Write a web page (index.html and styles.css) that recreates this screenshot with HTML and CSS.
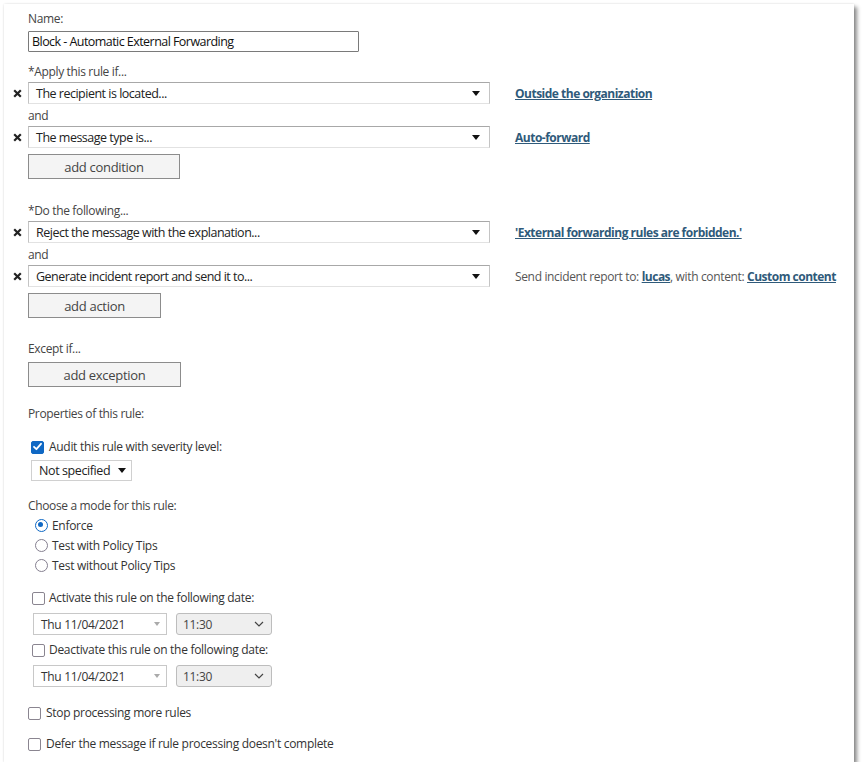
FILE: index.html
```html
<!DOCTYPE html>
<html>
<head>
<meta charset="utf-8">
<link rel="stylesheet" href="styles.css">
</head>
<body>
<div class="panel">
  <div class="lbl l-name">Name:</div>
  <div class="name-input">Block - Automatic External Forwarding</div>

  <div class="lbl l-apply">*Apply this rule if...</div>
  <div class="row r-first">
    <span class="x"><svg width="9" height="9" viewBox="0 0 9 9"><path d="M1.2 1.2 L7.8 7.8 M7.8 1.2 L1.2 7.8" stroke="#222" stroke-width="2.2"/></svg></span>
    <div class="dd"><span>The recipient is located...</span><span class="tri"></span></div>
    <a class="link">Outside the organization</a>
  </div>
  <div class="lbl l-and">and</div>
  <div class="row r-next">
    <span class="x"><svg width="9" height="9" viewBox="0 0 9 9"><path d="M1.2 1.2 L7.8 7.8 M7.8 1.2 L1.2 7.8" stroke="#222" stroke-width="2.2"/></svg></span>
    <div class="dd"><span>The message type is...</span><span class="tri"></span></div>
    <a class="link">Auto-forward</a>
  </div>
  <div class="btn b-cond">add condition</div>

  <div class="lbl l-do">*Do the following...</div>
  <div class="row r-first">
    <span class="x"><svg width="9" height="9" viewBox="0 0 9 9"><path d="M1.2 1.2 L7.8 7.8 M7.8 1.2 L1.2 7.8" stroke="#222" stroke-width="2.2"/></svg></span>
    <div class="dd"><span>Reject the message with the explanation...</span><span class="tri"></span></div>
    <a class="link">'External forwarding rules are forbidden.'</a>
  </div>
  <div class="lbl l-and">and</div>
  <div class="row r-next">
    <span class="x"><svg width="9" height="9" viewBox="0 0 9 9"><path d="M1.2 1.2 L7.8 7.8 M7.8 1.2 L1.2 7.8" stroke="#222" stroke-width="2.2"/></svg></span>
    <div class="dd"><span>Generate incident report and send it to...</span><span class="tri"></span></div>
    <span class="note">Send incident report to: <a class="link">lucas</a>, with content: <a class="link">Custom content</a></span>
  </div>
  <div class="btn b-action">add action</div>

  <div class="lbl l-except">Except if...</div>
  <div class="btn b-exc">add exception</div>

  <div class="lbl l-props">Properties of this rule:</div>
  <div class="check c-audit"><span class="cb on"><svg viewBox="0 0 13 13" width="13" height="13"><path d="M3 6.8 L5.4 9.2 L10 3.8" fill="none" stroke="#fff" stroke-width="1.8" stroke-linecap="round" stroke-linejoin="round"/></svg></span><span>Audit this rule with severity level:</span></div>
  <div class="sev"><span>Not specified</span><span class="tri"></span></div>

  <div class="lbl l-mode">Choose a mode for this rule:</div>
  <div class="radios">
    <div class="radio"><span class="rb on"></span><span>Enforce</span></div>
    <div class="radio"><span class="rb"></span><span>Test with Policy Tips</span></div>
    <div class="radio"><span class="rb"></span><span>Test without Policy Tips</span></div>
  </div>

  <div class="check c-act"><span class="cb"></span><span>Activate this rule on the following date:</span></div>
  <div class="dates">
    <div class="date"><span>Thu 11/04/2021</span><span class="caret"></span></div>
    <div class="time"><span>11:30</span><svg class="chev" width="10" height="6" viewBox="0 0 10 6"><path d="M1 1 L5 5 L9 1" fill="none" stroke="#444" stroke-width="1.2"/></svg></div>
  </div>
  <div class="check c-deact"><span class="cb"></span><span>Deactivate this rule on the following date:</span></div>
  <div class="dates">
    <div class="date"><span>Thu 11/04/2021</span><span class="caret"></span></div>
    <div class="time"><span>11:30</span><svg class="chev" width="10" height="6" viewBox="0 0 10 6"><path d="M1 1 L5 5 L9 1" fill="none" stroke="#444" stroke-width="1.2"/></svg></div>
  </div>

  <div class="check c-stop"><span class="cb"></span><span>Stop processing more rules</span></div>
  <div class="check c-defer"><span class="cb"></span><span>Defer the message if rule processing doesn't complete</span></div>
</div>
</body>
</html>
```

FILE: styles.css
```css
html, body {
  margin: 0;
  padding: 0;
  background: #ffffff;
}
body {
  font-family: "Open Sans", "Noto Sans", "Liberation Sans", sans-serif;
  font-size: 12px;
  color: #333;
}
.panel {
  margin: 4px 0 0 4px;
  width: 850px;
  height: 758px;
  box-sizing: border-box;
  padding: 7px 0 0 24px;
  background: #fff;
  box-shadow: 3px 3px 4px rgba(0,0,0,0.45), 0 0 2px rgba(0,0,0,0.12);
}
.lbl {
  height: 16px;
  line-height: 16px;
  color: #444;
  letter-spacing: -0.35px;
}
.l-apply { margin-top: 12px; }
.l-and { margin-top: 4px; }
.l-do { margin-top: 24px; }
.l-except { margin-top: 23px; }
.l-props { margin-top: 19px; }
.l-mode { margin-top: 17px; }

.name-input {
  margin-top: 4px;
  width: 331px;
  height: 21px;
  box-sizing: border-box;
  border: 1px solid #7a7a7a;
  border-radius: 1px;
  padding: 0 3px;
  line-height: 19px;
  font-size: 12.5px;
  color: #111;
  letter-spacing: -0.55px;
}

.row {
  display: flex;
  align-items: center;
  height: 22px;
  margin-left: -24px;
}
.r-first { margin-top: 2px; }
.r-next { margin-top: 2px; }
.x {
  width: 24px;
  display: flex;
  align-items: center;
  justify-content: center;
  padding-left: 2px;
  box-sizing: border-box;
}
.dd {
  width: 462px;
  height: 22px;
  box-sizing: border-box;
  border: 1px solid #c4c4c4;
  border-top-color: #a8a8a8;
  border-bottom-color: #e2e2e2;
  display: flex;
  align-items: center;
  justify-content: space-between;
  padding: 0 9px 0 7px;
  color: #222;
  font-size: 12.5px;
  letter-spacing: -0.5px;
}
.tri {
  width: 0;
  height: 0;
  border-left: 4px solid transparent;
  border-right: 4px solid transparent;
  border-top: 5px solid #111;
}
.link {
  margin-left: 25px;
  color: #2f5a7a;
  font-weight: bold;
  text-decoration: underline;
  letter-spacing: -0.5px;
}
.note {
  margin-left: 25px;
  color: #555;
  letter-spacing: -0.35px;
}
.note .link { margin-left: 0; }

.btn {
  height: 25px;
  box-sizing: border-box;
  border: 1px solid #8c8c8c;
  background: #f4f4f4;
  text-align: center;
  line-height: 24px;
  font-size: 13px;
  color: #444;
  letter-spacing: -0.3px;
}
.b-cond { margin-top: 6px; width: 152px; }
.b-action { margin-top: 6px; width: 133px; }
.b-exc { margin-top: 5px; width: 153px; }

.check {
  display: flex;
  align-items: center;
  height: 16px;
  line-height: 16px;
  gap: 5px;
  color: #333;
  letter-spacing: -0.3px;
}
.c-audit { margin-top: 17px; margin-left: 3px; }
.c-act { margin-top: 15px; margin-left: 4px; gap: 4px; }
.c-deact { margin-top: 7px; margin-left: 4px; gap: 4px; }
.c-stop { margin-top: 18px; gap: 5px; }
.c-defer { margin-top: 15px; gap: 5px; }
.cb {
  width: 13px;
  height: 13px;
  box-sizing: border-box;
  border: 1.5px solid #8a8590;
  border-radius: 2px;
  background: #fff;
  display: inline-block;
  flex: none;
}
.cb.on {
  background: #0f68c4;
  border-color: #0f68c4;
  position: relative;
}
.cb.on svg {
  position: absolute;
  left: -1.5px;
  top: -1.5px;
}

.sev {
  margin-top: 5px;
  margin-left: 3px;
  width: 101px;
  height: 21px;
  box-sizing: border-box;
  border: 1px solid #d0d0d0;
  display: flex;
  align-items: center;
  justify-content: space-between;
  padding: 0 5px 0 7px;
  color: #222;
  font-size: 12.5px;
  letter-spacing: -0.4px;
}

.radios {
  margin-top: 1px;
  margin-left: 7px;
}
.radio {
  display: flex;
  align-items: center;
  height: 20px;
  gap: 4px;
  color: #333;
  letter-spacing: -0.3px;
}
.rb {
  width: 13px;
  height: 13px;
  box-sizing: border-box;
  border: 1.6px solid #858090;
  border-radius: 50%;
  background: #fff;
  position: relative;
  flex: none;
}
.rb.on { border-color: #0f68c4; }
.rb.on::after {
  content: "";
  position: absolute;
  left: 2.4px;
  top: 2.4px;
  width: 5px;
  height: 5px;
  border-radius: 50%;
  background: #0f68c4;
}

.dates {
  margin-top: 7px;
  margin-left: 5px;
  display: flex;
  gap: 9px;
}
.date {
  width: 134px;
  height: 22px;
  box-sizing: border-box;
  border: 1px solid #c8c8c8;
  display: flex;
  align-items: center;
  justify-content: space-between;
  padding: 0 6px 0 7px;
  color: #333;
  letter-spacing: -0.3px;
}
.caret {
  width: 0;
  height: 0;
  border-left: 3.5px solid transparent;
  border-right: 3.5px solid transparent;
  border-top: 4px solid #aaa;
}
.time {
  width: 96px;
  height: 22px;
  box-sizing: border-box;
  border: 1px solid #bdbdbd;
  border-radius: 3px;
  background: #efefef;
  display: flex;
  align-items: center;
  justify-content: space-between;
  padding: 0 7px 0 6px;
  color: #444;
  letter-spacing: -0.3px;
}
```
